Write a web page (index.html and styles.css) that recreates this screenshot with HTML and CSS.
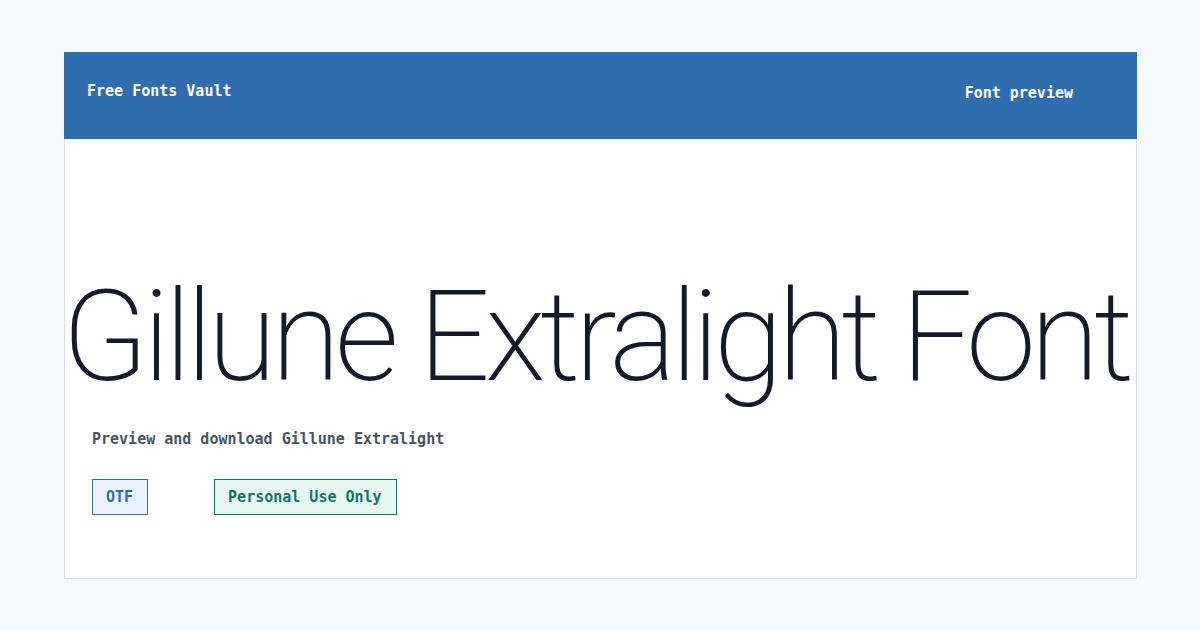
FILE: index.html
```html
<!DOCTYPE html>
<html lang="en">
<head>
    <meta charset="UTF-8">
    <meta name="viewport" content="width=device-width, initial-scale=1.0">
    <title>Gillune Extralight Font</title>
    <link rel="stylesheet" href="styles.css">
</head>
<body>

<div class="card">
    <div class="topbar">
        <span class="brand">Free Fonts Vault</span>
        <span class="section">Font preview</span>
    </div>

    <div class="preview">
        <h1 class="sample">Gillune Extralight Font</h1>
        <p class="lead">Preview and download Gillune Extralight</p>
        <div class="tags">
            <span class="tag tag-format">OTF</span>
            <span class="tag tag-license">Personal Use Only</span>
        </div>
    </div>
</div>

</body>
</html>
```

FILE: styles.css
```css
body {
    margin: 0;
    height: 630px;
    background-color: #f6f9fe;
    font-family: "DejaVu Sans Mono", "Liberation Mono", monospace;
    font-weight: bold;
}

.card {
    width: 1073px;
    margin: 52px 0 0 64px;
    box-sizing: border-box;
    background-color: #fff;
    border: 1px solid #d8dfe9;
    border-top: none;
}

.topbar {
    display: flex;
    justify-content: space-between;
    align-items: flex-start;
    height: 87px;
    box-sizing: border-box;
    margin: 0 -1px;
    padding: 30px 64px 0 23px;
    background-color: #2f6dae;
    color: #fff;
    font-size: 15px;
}

.section {
    margin-top: 2px;
}

.preview {
    padding: 0 0 63px 0;
}

/* big specimen line */
.sample {
    margin: 135px 0 0 -3px;
    font-family: Roboto, sans-serif;
    font-weight: 200;
    font-size: 126px;
    line-height: 1;
    color: #131a2a;
    white-space: nowrap;
    letter-spacing: -5.4px;
}

.lead {
    margin: 30px 0 0 27px;
    font-size: 15px;
    color: #475569;
}

.tags {
    display: flex;
    gap: 66px;
    margin: 31px 0 0 27px;
}

.tag {
    padding: 8px 14px 8px 13px;
    font-size: 15px;
    border: 1px solid;
}

.tag-format {
    background-color: #e9f2fd;
    border-color: #2f6dae;
    color: #2f6dae;
}

.tag-license {
    background-color: #e6f6f1;
    border-color: #0f766e;
    color: #0f766e;
}
```
